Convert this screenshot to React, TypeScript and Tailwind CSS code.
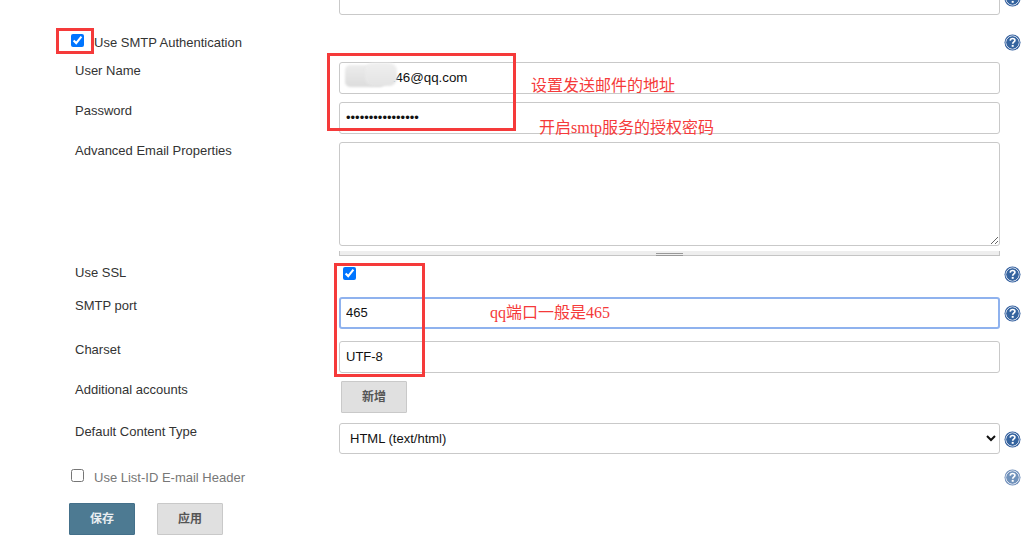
import React from 'react';

const fontStack = "font-['Liberation_Sans','Noto_Sans_CJK_SC',sans-serif]";
const fieldBase = 'block w-[661px] h-[32px] rounded-[3px] bg-white pb-[2px] text-[#111] outline-none';
const inputClass = `${fieldBase} border border-[#c9c9c9] px-[6px] text-[13px]`;

function HelpIcon({ faded }: { faded?: boolean }) {
  return (
    <svg width="17" height="17" viewBox="0 0 17 17" className={faded ? 'block opacity-70' : 'block'}>
      <circle cx="8.5" cy="8.5" r="8" fill="#2f5c9c" />
      <circle cx="8.5" cy="8.5" r="6.6" fill="none" stroke="#e6ecf5" strokeWidth="1" />
      <circle cx="8.5" cy="8.5" r="6" fill="#35649f" />
      <path d="M6.2 6.6C6.3 5.2 7.3 4.5 8.6 4.5C10 4.5 10.9 5.3 10.9 6.4C10.9 7.9 8.7 8 8.7 9.8" fill="none" stroke="#fff" strokeWidth="1.7" />
      <rect x="7.7" y="10.9" width="2" height="1.9" fill="#fff" />
    </svg>
  );
}

function Row({ label, children, help, className }: { label?: string; children?: React.ReactNode; help?: boolean; className?: string }) {
  return (
    <div className={`grid grid-cols-[339px_661px_1fr] ${className ?? ''}`}>
      <div className="pl-[75px] pt-[1px] text-[13px] leading-4 text-[#333]">{label}</div>
      <div>{children}</div>
      <div className="flex items-center pl-[4px] pt-[1px]">{help && <HelpIcon />}</div>
    </div>
  );
}

function CheckRow({ label, checked, faded, className }: { label: string; checked?: boolean; faded?: boolean; className?: string }) {
  return (
    <div className={`flex h-[17px] items-start pl-[71px] pr-[4px] ${className ?? ''}`}>
      <input type="checkbox" defaultChecked={checked} className="m-0 h-[13px] w-[13px]" />
      <span className={`ml-[10px] mt-[1px] text-[13px] leading-4 ${faded ? 'text-[#777]' : 'text-[#333]'}`}>{label}</span>
      <div className="ml-auto w-[17px]"><HelpIcon faded={faded} /></div>
    </div>
  );
}

export default function App() {
  return (
    <div className={`relative h-[539px] w-[1025px] overflow-hidden bg-white ${fontStack}`}>
      {/* clipped field from the previous section */}
      <div className="grid h-[15px] grid-cols-[339px_661px_1fr]">
        <div />
        <div className="-mt-[17px]"><input readOnly className={inputClass} /></div>
        <div className="-mt-[10px] pl-[4px]"><HelpIcon /></div>
      </div>

      <CheckRow label="Use SMTP Authentication" checked className="mt-[19px]" />

      <Row label="User Name" className="mt-[11px]">
        <input readOnly value="246@qq.com" className={`${fieldBase} border border-[#c9c9c9] pl-[48px] pr-[6px] text-[13.33px]`} />
      </Row>
      <Row label="Password" className="mt-[8px]">
        <input readOnly type="password" value="1234567890123456" className={inputClass} />
      </Row>
      <Row label="Advanced Email Properties" className="mt-[8px]">
        <textarea readOnly className="block h-[104px] w-[661px] rounded-[3px] border border-[#c9c9c9] bg-white outline-none" />
      </Row>
      <div className="ml-[339px] mt-[5px] flex h-[5px] w-[661px] items-start justify-center border-x border-b border-[#c4c4c4] bg-[#eeeeee]">
        <div className="mt-[2px] h-[3px] w-[27px] border-y border-[#999]" />
      </div>

      <Row label="Use SSL" help className="mt-[8px] h-[20px]">
        <input type="checkbox" defaultChecked className="ml-[4px] mt-[3px] block h-[13px] w-[13px]" />
      </Row>
      <Row label="SMTP port" help className="mt-[13px]">
        <input readOnly value="465" className={`${fieldBase} border-2 border-[#8fb2ee] px-[5px] text-[13px]`} />
      </Row>
      <Row label="Charset" className="mt-[12px]">
        <input readOnly value="UTF-8" className={inputClass} />
      </Row>
      <Row label="Additional accounts" className="mt-[8px]">
        <button className="ml-[2px] block h-[32px] w-[66px] rounded-[1px] border border-[#c9c9c9] bg-[#e0e0e0] text-[12px] font-bold text-[#555]">新增</button>
      </Row>
      <Row label="Default Content Type" help className="mt-[10px]">
        <select className="block h-[31px] w-[661px] rounded-[3px] border border-[#c9c9c9] bg-white pl-[6px] text-[13px] text-[#111]">
          <option>HTML (text/html)</option>
        </select>
      </Row>

      <CheckRow label="Use List-ID E-mail Header" faded className="mt-[15px]" />

      <div className="ml-[69px] mt-[17px] flex gap-[22px]">
        <button className="h-[32px] w-[66px] rounded-[1px] border border-[#44708a] bg-[#4d7a92] text-[12px] font-bold text-[#e8eef1]">保存</button>
        <button className="h-[32px] w-[66px] rounded-[1px] border border-[#c9c9c9] bg-[#e0e0e0] text-[12px] font-bold text-[#555]">应用</button>
      </div>

      {/* blurred out part of the address */}
      <div className="absolute left-[345px] top-[65px] h-[22px] w-[40px] rounded-[5px] bg-gradient-to-b from-[#ededed] to-[#dcdcdc] blur-[1px]" />
      <div className="absolute left-[365px] top-[63px] h-[23px] w-[32px] rounded-[8px] bg-gradient-to-b from-[#efefef] to-[#e4e4e4] blur-[1px]" />

      {/* red annotations drawn over the form */}
      <div className="absolute left-[56px] top-[28px] h-[26px] w-[38px] border-[3px] border-[#f53a3a]" />
      <div className="absolute left-[327px] top-[53px] h-[78px] w-[189px] border-[3px] border-[#f53a3a]" />
      <div className="absolute left-[334px] top-[263px] h-[114px] w-[91px] border-[3px] border-[#f53a3a]" />
      <div className="absolute left-[531px] top-[77px] whitespace-nowrap font-['Liberation_Serif','Noto_Sans_CJK_SC',serif] text-[16px] leading-[18px] text-[#f53a3a]">设置发送邮件的地址</div>
      <div className="absolute left-[539px] top-[119px] whitespace-nowrap font-['Liberation_Serif','Noto_Sans_CJK_SC',serif] text-[16px] leading-[18px] text-[#f53a3a]">开启smtp服务的授权密码</div>
      <div className="absolute left-[490px] top-[304px] whitespace-nowrap font-['Liberation_Serif','Noto_Sans_CJK_SC',serif] text-[16px] leading-[18px] text-[#f53a3a]">qq端口一般是465</div>
    </div>
  );
}
